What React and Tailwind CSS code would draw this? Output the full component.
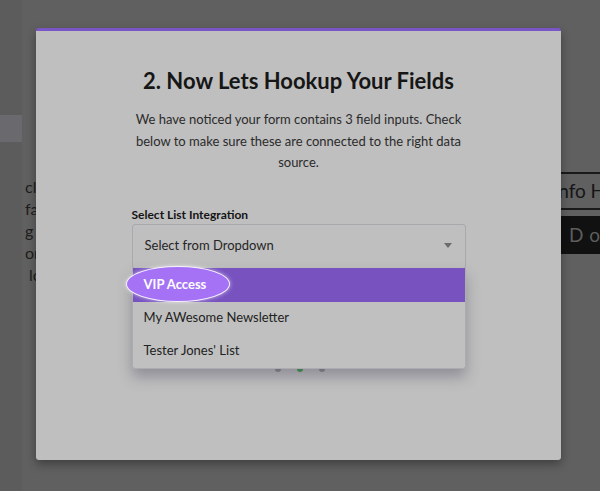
import React from "react";

const options = ["VIP Access", "My AWesome Newsletter", "Tester Jones' List"];

function Caret() {
  return (
    <svg width="8" height="6" viewBox="0 0 8 6" className="block">
      <path d="M0 0 H8 L4 5 Z" fill="#6b6b6b" />
    </svg>
  );
}

export default function App() {
  return (
    <div className="relative h-[491px] w-[600px] overflow-hidden bg-[#606060] font-['Lato',sans-serif]">
      {/* page behind the overlay */}
      <div className="flex h-full">
        <div className="w-[22px] shrink-0 bg-[#5c5c5c] pt-[115px]">
          <div className="h-[27px] bg-[#6a6a6e]" />
        </div>
        <div className="relative flex-1">
          <div className="pt-[176px] pl-[3px] text-[16px] leading-[22px] text-[#1e1e1e] whitespace-pre">
            <p>click</p>
            <p>fan</p>
            <p>g con</p>
            <p>orm</p>
            <p> lo</p>
          </div>
          <div className="absolute left-[500px] top-[172px] w-[100px] overflow-hidden">
            <div className="flex h-[38px] items-center whitespace-nowrap border-y-2 border-[#1a1a1a] pl-[31px] text-[19px] text-[#151515]">
              Info Hub
            </div>
            <div className="mt-[6px] flex h-[38px] items-center whitespace-nowrap bg-[#111111] pl-[47px] text-[19px] tracking-[6px] text-[#5d5d5d]">
              Do
            </div>
          </div>
        </div>
      </div>

      {/* modal */}
      <div className="absolute left-[36px] top-[28px] h-[432px] w-[525px] rounded-[3px] border-t-[3px] border-[#7a55c8] bg-[#bfbfbf] shadow-[0_4px_10px_rgba(0,0,0,0.35)]">
        <div className="flex flex-col items-center pt-[36px]">
          <h2 className="text-[22px] font-bold leading-[28px] text-[#161616]">
            2. Now Lets Hookup Your Fields
          </h2>
          <p className="mt-[14px] max-w-[332px] text-center text-[13px] leading-[21.5px] text-[#2b2b2b]">
            We have noticed your form contains 3 field inputs. Check below to make sure these are connected to the right data source.
          </p>

          <div className="mt-[33px] w-[334px]">
            <div className="text-[12px] font-bold leading-[16px] text-[#141414]">
              Select List Integration
            </div>
            <div className="relative mt-[1px]">
              <div className="flex h-[45px] items-center justify-between rounded-[3px] border border-[#a9a9ad] px-[12px] pr-[13px] text-[13px] text-[#262626]">
                <span>Select from Dropdown</span>
                <Caret />
              </div>

              {/* dropdown menu */}
              <div className="absolute left-0 right-0 top-[44px] z-10 rounded-b-[3px] border border-t-0 border-[#ababb0] bg-[#c0c0c0] shadow-[0_8px_14px_rgba(60,55,80,0.35)]">
                {options.map((o, i) =>
                  i === 0 ? (
                    <div key={o} className="relative flex h-[34px] items-center bg-[#7853c0] px-[11px] text-[13px] font-bold text-white">
                      <span className="absolute left-[-7px] top-[-2px] h-[36px] w-[104px] rounded-[50%] border-[1.5px] border-white/90 bg-[#a572f6] shadow-[0_0_4px_rgba(255,255,255,0.6)]" />
                      <span className="relative">{o}</span>
                    </div>
                  ) : (
                    <div key={o} className="flex h-[33px] items-center px-[11px] text-[13px] text-[#222222]">
                      {o}
                    </div>
                  )
                )}
              </div>

              {/* loading dots partly hidden by the menu */}
              <div className="mt-[97px] flex justify-center gap-[16px] pl-[2px]">
                <span className="h-[6px] w-[6px] rounded-full bg-[#8a8a8a]" />
                <span className="h-[6px] w-[6px] rounded-full bg-[#3f9c4c]" />
                <span className="h-[6px] w-[6px] rounded-full bg-[#8a8a8a]" />
              </div>
            </div>
          </div>
        </div>
      </div>
    </div>
  );
}
